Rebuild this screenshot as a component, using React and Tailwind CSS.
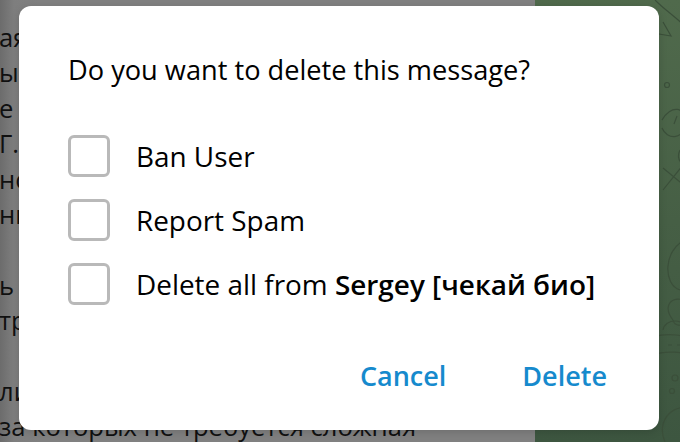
import React from "react";

const bgLines = ["ая", "ый", "е", "Г.", "но", "ни", "", "ь", "тр", "", "ли", "за которых не требуется сложная"];

const options = [
  { id: "ban", label: "Ban User" },
  { id: "spam", label: "Report Spam" },
  { id: "all", label: "Delete all from", bold: "Sergey [чекай био]" },
];

function Doodles() {
  return (
    <svg width="145" height="442" viewBox="0 0 145 442" fill="none" stroke="#3b4f3a" strokeWidth="1.2" className="block">
      <path d="M120 0 C135 15 150 22 160 40" />
      <path d="M128 22 l8 14 l-12 -2" />
      <circle cx="132" cy="85" r="2.5" />
      <path d="M127 120 C135 105 152 105 150 125 C148 140 132 140 127 128" />
      <path d="M139 124 l3 -8" />
      <path d="M145 150 C140 160 148 170 160 160" />
      <path d="M128 190 l20 -25 M128 168 l22 18" />
      <path d="M150 240 C128 250 128 285 145 290" />
      <path d="M138 320 C122 300 150 290 155 310 C158 325 140 330 138 320" />
      <path d="M128 330 C130 318 150 318 152 330" />
      <path d="M115 340 C125 330 160 335 160 345" />
      <path d="M133 345 h4 M142 345 h4 M151 345 h4" />
      <path d="M118 355 C130 350 150 352 160 356" />
      <circle cx="140" cy="378" r="3" />
      <circle cx="137" cy="391" r="2.5" />
      <path d="M130 442 C120 420 140 400 160 410" />
      <circle cx="35" cy="15" r="3" />
      <path d="M10 60 C25 45 45 50 40 70 C35 85 15 80 12 68" />
      <path d="M60 130 C80 120 95 135 85 150" />
      <path d="M20 200 l18 22 M38 200 l-18 22" />
      <path d="M70 260 C60 280 80 300 100 285" />
      <circle cx="30" cy="330" r="4" />
      <path d="M5 400 C20 380 45 390 40 410 C36 425 15 425 10 415" />
      <path d="M85 410 l6 10 l6 -10" />
    </svg>
  );
}

function Checkbox() {
  return <div className="w-[42px] h-[42px] shrink-0 rounded-[6px] border-[3px] border-[#b9b9b9] bg-white" />;
}

export default function App() {
  return (
    <div className="relative w-[680px] h-[442px] overflow-hidden font-['Open_Sans',sans-serif]">
      {/* chat behind, dimmed */}
      <div className="flex h-full">
        <div className="w-[535px] h-full bg-[linear-gradient(90deg,#6c6c6c_0px,#7e7e7e_14px,#808080_40px)] pt-[20px] text-[25.6px] leading-[35.4px] text-[#101010] whitespace-nowrap">
          {bgLines.map((line, i) => (
            <div key={i} className="h-[35.4px] -ml-[1px]">{line}</div>
          ))}
        </div>
        <div className="flex-1 h-full bg-[linear-gradient(180deg,#506a4c_0%,#465f45_50%,#3d5640_100%)]">
          <Doodles />
        </div>
      </div>

      {/* modal */}
      <div className="absolute left-[19px] top-[6px] w-[640px] h-[424px] rounded-[12px] bg-white pl-[49px] pr-[52px] pt-[45px] flex flex-col text-black shadow-[0_2px_8px_rgba(0,0,0,0.15)]">
        <div className="text-[27.2px] leading-[37px]">Do you want to delete this message?</div>

        <div className="mt-[47px] flex flex-col gap-[22px]">
          {options.map((o) => (
            <div key={o.id} className="flex items-center h-[42px]">
              <Checkbox />
              <div className="ml-[26px] text-[27.9px] leading-[37px] whitespace-nowrap">
                {o.label}
                {o.bold && <span className="font-semibold"> {o.bold}</span>}
              </div>
            </div>
          ))}
        </div>

        <div className="mt-auto mb-[36px] flex justify-end items-center gap-[76px] text-[27px] leading-[37px] font-semibold text-[#168acd]">
          <button className="font-semibold">Cancel</button>
          <button className="font-semibold">Delete</button>
        </div>
      </div>
    </div>
  );
}
